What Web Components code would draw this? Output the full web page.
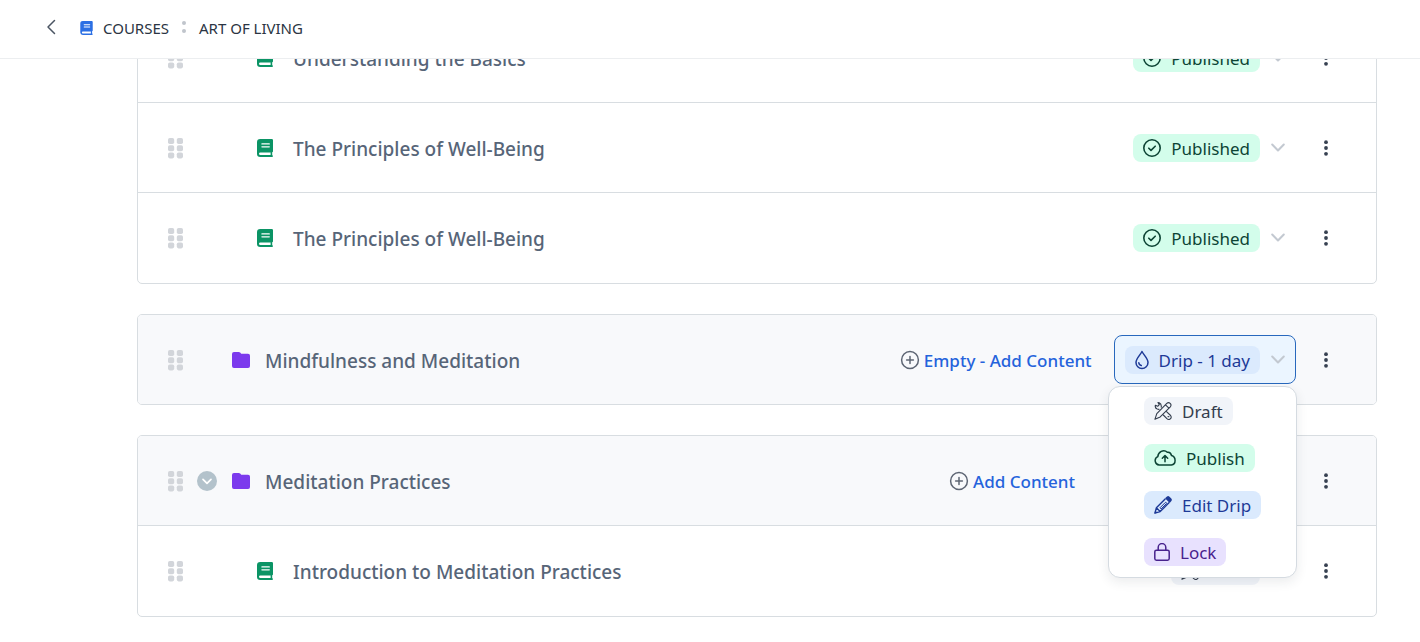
<!DOCTYPE html>
<html lang="en">
<head>
<meta charset="utf-8">
<meta name="viewport" content="width=device-width, initial-scale=1">
<title>Art of Living</title>
<style>
  body {
    margin: 0;
    background: #fff;
    color: #576578;
    font-family: "Noto Sans", "Open Sans", sans-serif;
    font-weight: 500;
  }
</style>
</head>
<body>
<course-page>
  <course-header slot="header" section="Courses" course="Art of Living"></course-header>
  <course-card>
    <course-row kind="lesson" label="Understanding the Basics" status="published"></course-row>
    <course-row kind="lesson" label="The Principles of Well-Being" status="published"></course-row>
    <course-row kind="lesson" label="The Principles of Well-Being" status="published"></course-row>
  </course-card>
  <course-card>
    <course-row kind="section" label="Mindfulness and Meditation" action="Empty - Add Content" status="drip" open></course-row>
  </course-card>
  <course-card>
    <course-row kind="section" label="Meditation Practices" action="Add Content" collapsible></course-row>
    <course-row kind="lesson" label="Introduction to Meditation Practices" status="draft"></course-row>
  </course-card>
</course-page>

<script>
const ICONS = {
  back: [10, 16, '<path d="M8.5 1.5 2 8l6.5 6.5" fill="none" stroke="currentColor" stroke-width="1.5" stroke-linecap="round" stroke-linejoin="round"/>'],
  book: [16, 18, '<path fill-rule="evenodd" fill="currentColor" d="M3.2 0H14.8Q16 0 16 1.2V12.2Q16 13 15.2 13.3V16.2Q16 16.4 16 17.1 16 18 15 18H3.2Q0 18 0 14.8V3.2Q0 0 3.2 0ZM3.4 13.5Q2 13.6 2 14.8T3.4 16.1H13.6V13.5ZM4.9 4.3Q4.3 4.3 4.3 4.9T4.9 5.5H12.3Q12.9 5.5 12.9 4.9T12.3 4.3ZM4.9 7.2Q4.3 7.2 4.3 7.8T4.9 8.4H12.3Q12.9 8.4 12.9 7.8T12.3 7.2Z"/>'],
  folder: [18, 16, '<path fill="currentColor" d="M2 0H6.7Q7.6 0 8.2.6L9.2 1.7H16Q18 1.7 18 3.7V14Q18 16 16 16H2Q0 16 0 14V2Q0 0 2 0Z"/>'],
  drag: [16, 22, '<g fill="currentColor"><rect x="0" y="1" width="6.2" height="6" rx="1.8"/><rect x="8.8" y="1" width="6.2" height="6" rx="1.8"/><rect x="0" y="8.2" width="6.2" height="6" rx="1.8"/><rect x="8.8" y="8.2" width="6.2" height="6" rx="1.8"/><rect x="0" y="15.4" width="6.2" height="6" rx="1.8"/><rect x="8.8" y="15.4" width="6.2" height="6" rx="1.8"/></g>'],
  toggle: [20, 20, '<circle cx="10" cy="10" r="10" fill="#b3c2cb"/><path d="m6 8.4 4 4 4-4" fill="none" stroke="#fff" stroke-width="1.7" stroke-linecap="round" stroke-linejoin="round"/>'],
  plus: [20, 20, '<g fill="none" stroke="currentColor" stroke-width="1.5" stroke-linecap="round"><circle cx="10" cy="10" r="8.4"/><path d="M10 6.6v6.8M6.6 10h6.8"/></g>'],
  chevron: [14, 10, '<path d="m1.2 1.5 5.8 6 5.8-6" fill="none" stroke="currentColor" stroke-width="2" stroke-linecap="round" stroke-linejoin="round"/>'],
  more: [6, 18, '<g fill="currentColor"><circle cx="3" cy="3.2" r="1.9"/><circle cx="3" cy="9" r="1.9"/><circle cx="3" cy="14.8" r="1.9"/></g>'],
  published: [18, 18, '<g fill="none" stroke="currentColor" stroke-width="1.6" stroke-linecap="round" stroke-linejoin="round"><circle cx="9" cy="9" r="8.2"/><path d="m5.8 9.2 2.2 2.2 4.2-4.2"/></g>'],
  drip: [14, 20, '<g fill="none" stroke="currentColor" stroke-width="1.5" stroke-linecap="round" stroke-linejoin="round"><path d="M7 1.5C5.4 4.8 1 8.4 1 12.5a6 6 0 0 0 12 0C13 8.4 8.6 4.8 7 1.5Z"/><path d="M3.8 12.8q.2 2.3 2.5 2.7"/></g>'],
  draft: [18, 20, '<g fill="none" stroke="currentColor" stroke-width="1.1" stroke-linecap="round" stroke-linejoin="round"><path d="M12.8 2.4Q14.5.8 16.2 2.4 17.8 4 16.3 5.8L6.2 15.9.9 18.3 2.8 12.6ZM11.5 3.8l3.4 3.3"/><path d="M7.2 6.3Q7.8 3.1 5.2 1.8L3.9 1.5 5.3 3.6 3.7 5.3 1.4 4.2Q.7 7 3.2 8L5 8.4M12.5 10.6l4.1 3.9q1.4 2.2-.5 3.5-1.7 1.1-3.2-.3L9.3 14"/><path d="m14 15.6 1 .1"/></g>'],
  publish: [22, 18, '<g fill="none" stroke="currentColor" stroke-width="1.5" stroke-linecap="round" stroke-linejoin="round"><path d="M5.2 16A4.4 4.4 0 0 1 3.8 7.6C4 3.2 9.7-.4 13.3 3.3Q16.7 2.7 17.5 6.5C22.2 7.7 22.4 15.3 17.4 16Z"/><path d="M11 12.8V6.7M8.3 9.2 11 6.5l2.7 2.7"/></g>'],
  edit: [18, 18, '<path fill="currentColor" d="m11 2.2 2-1.7Q14.2-.4 15.5.7L17.3 2.5Q18.5 4 17.2 5.2L15.7 7Z"/><path d="M11.4 2.8 2.4 11.8.9 17.1l5.3-1.5 9-9M2.4 11.8l3.8 3.8" fill="none" stroke="currentColor" stroke-width="1.4" stroke-linejoin="round"/><path d="m6 11.8 5.2-5.2q.6-.5 1.1 0t0 1.1L7.1 12.9Z" fill="none" stroke="currentColor" stroke-width="1"/><path d="M.5 17.5l.8-3 2.2 2.2Z" fill="currentColor"/>'],
  lock: [16, 18, '<g fill="none" stroke="currentColor" stroke-width="1.5"><rect x=".8" y="7.2" width="14.4" height="10" rx="1.6"/><path d="M4.2 7.2V4.4a3.8 3.8 0 0 1 7.6 0v2.8"/></g>']
};

class CourseIcon extends HTMLElement {
  connectedCallback() {
    const [w, h, shape] = ICONS[this.getAttribute('name')];
    const scale = Number(this.getAttribute('scale') || 1);
    this.attachShadow({ mode: 'open' }).innerHTML = `
      <style>:host { display: inline-flex; flex: none; } svg { display: block; }</style>
      <svg aria-hidden="true" width="${Math.round(w * scale)}" height="${Math.round(h * scale)}" viewBox="0 0 ${w} ${h}">${shape}</svg>`;
  }
}
customElements.define('course-icon', CourseIcon);

class StatusBadge extends HTMLElement {
  connectedCallback() {
    this.attachShadow({ mode: 'open' }).innerHTML = `
      <style>
        :host {
          display: inline-flex; align-items: center; gap: 10px;
          box-sizing: border-box; height: 28px; padding: 0 10px;
          border-radius: 8px; font-size: 17px; font-weight: 400; line-height: 28px; white-space: nowrap;
        }
        :host([tone="green"]) { background: #d3fdeb; color: #0d4435; }
        :host([tone="blue"]) { background: #dbeafd; color: #1e3a97; }
        :host([tone="grey"]) { background: #f1f4f9; color: #333d4d; }
        :host([tone="purple"]) { background: #e8e1fe; color: #48228d; }
        span { margin-top: 2px; }
      </style>
      <course-icon name="${this.getAttribute('icon')}"></course-icon><span><slot></slot></span>`;
  }
}
customElements.define('status-badge', StatusBadge);

class StatusMenu extends HTMLElement {
  connectedCallback() {
    this.attachShadow({ mode: 'open' }).innerHTML = `
      <style>
        :host { display: block; }
        ul {
          display: flex; flex-direction: column; gap: 19px;
          box-sizing: border-box; width: 189px; margin: 0; padding: 10px 35px 11px;
          list-style: none; background: #fff; border: 1px solid #d5dbe1; border-radius: 12px;
          box-shadow: 0 4px 12px rgba(30, 41, 59, .09);
        }
        li { display: flex; }
        button { display: flex; padding: 0; border: 0; background: none; font: inherit; cursor: pointer; }
      </style>
      <ul>
        <li><button type="button"><status-badge tone="grey" icon="draft">Draft</status-badge></button></li>
        <li><button type="button"><status-badge tone="green" icon="publish">Publish</status-badge></button></li>
        <li><button type="button"><status-badge tone="blue" icon="edit">Edit Drip</status-badge></button></li>
        <li><button type="button"><status-badge tone="purple" icon="lock">Lock</status-badge></button></li>
      </ul>`;
  }
}
customElements.define('status-menu', StatusMenu);

const STATUS = {
  published: ['green', 'published', 'Published'],
  drip: ['blue', 'drip', 'Drip - 1 day'],
  draft: ['grey', 'draft', 'Draft']
};

class StatusPicker extends HTMLElement {
  connectedCallback() {
    const [tone, icon, text] = STATUS[this.getAttribute('value')];
    const open = this.hasAttribute('open');
    this.attachShadow({ mode: 'open' }).innerHTML = `
      <style>
        :host { display: block; position: relative; }
        button {
          display: flex; align-items: center; gap: 11px;
          box-sizing: border-box; height: 49px; padding: 0 10px;
          border: 1px solid transparent; border-radius: 8px;
          background: none; color: #c3c9d1; font: inherit; cursor: pointer;
        }
        :host([open]) button { background: #ebf5ff; border-color: #2868bd; }
        status-menu { position: absolute; z-index: 10; top: calc(100% + 2px); right: -1px; }
      </style>
      <button type="button" aria-haspopup="true" aria-expanded="${open}">
        <status-badge tone="${tone}" icon="${icon}">${text}</status-badge>
        <course-icon name="chevron"></course-icon>
      </button>
      ${open ? '<status-menu></status-menu>' : ''}`;
  }
}
customElements.define('status-picker', StatusPicker);

class CourseRow extends HTMLElement {
  connectedCallback() {
    const section = this.getAttribute('kind') === 'section';
    const status = this.getAttribute('status');
    const action = this.getAttribute('action');
    this.attachShadow({ mode: 'open' }).innerHTML = `
      <style>
        :host {
          display: flex; align-items: center; box-sizing: border-box;
          min-height: 90px; padding: 0 30px;
        }
        :host([kind="section"]) { box-sizing: content-box; min-height: 89px; background: #f8f9fb; }
        button { display: flex; align-items: center; justify-content: center; padding: 0; border: 0; background: none; cursor: pointer; }
        .drag { width: 16px; color: #d2d5da; }
        .toggle { display: flex; width: 20px; margin: 0 15px 0 13px; }
        .kind { color: #7c3aed; }
        h2 { flex: 1; margin: 2px 0 0 15px; font-size: 19px; line-height: 28px; font-weight: 500; }
        :host([kind="lesson"]) .kind { margin-left: 25px; color: #0b9465; }
        :host([kind="lesson"]) h2 { margin-left: 20px; }
        a { display: flex; align-items: center; gap: 4px; margin-right: 22px; color: #2563dc; font-size: 17px; line-height: 28px; text-decoration: none; }
        a span { margin-top: 2px; }
        a course-icon { color: #5d6573; }
        .none { width: 199px; }
        .more { width: 40px; height: 40px; margin-left: 10px; color: #374151; }
      </style>
      <button class="drag" type="button" aria-label="Reorder"><course-icon name="drag"></course-icon></button>
      <span class="toggle">${this.hasAttribute('collapsible') ? '<button type="button" aria-label="Collapse"><course-icon name="toggle"></course-icon></button>' : ''}</span>
      <course-icon class="kind" name="${section ? 'folder' : 'book'}"></course-icon>
      <h2>${this.getAttribute('label')}</h2>
      ${action ? `<a href="#"><course-icon name="plus"></course-icon><span>${action}</span></a>` : ''}
      ${status ? `<status-picker value="${status}" ${this.hasAttribute('open') ? 'open' : ''}></status-picker>` : '<span class="none"></span>'}
      <button class="more" type="button" aria-label="More options"><course-icon name="more"></course-icon></button>`;
  }
}
customElements.define('course-row', CourseRow);

class CourseCard extends HTMLElement {
  connectedCallback() {
    this.attachShadow({ mode: 'open' }).innerHTML = `
      <style>
        :host { display: block; border: 1px solid #d8dde1; border-radius: 5px; }
        ::slotted(course-row:not(:last-child)) { border-bottom: 1px solid #d8dde1; }
        ::slotted(course-row:first-child) { border-top-left-radius: 4px; border-top-right-radius: 4px; }
        ::slotted(course-row:last-child) { border-bottom-left-radius: 4px; border-bottom-right-radius: 4px; }
      </style>
      <slot></slot>`;
  }
}
customElements.define('course-card', CourseCard);

class CourseHeader extends HTMLElement {
  connectedCallback() {
    this.attachShadow({ mode: 'open' }).innerHTML = `
      <style>
        :host { display: block; background: #fff; border-bottom: 1px solid #eceef0; }
        nav { display: flex; align-items: center; box-sizing: border-box; height: 58px; padding: 0 46px 4px; }
        button { display: flex; padding: 0; border: 0; background: none; color: #4b5563; cursor: pointer; }
        a { display: flex; align-items: center; gap: 10px; padding-top: 2px; color: #2b3543; font-size: 15px; font-weight: 400; line-height: 20px; text-decoration: none; text-transform: uppercase; }
        .section { margin-left: 24px; }
        .section course-icon { color: #2b6fe4; }
        .dots { display: flex; flex-direction: column; gap: 4px; margin: 0 13px; }
        .dots i { width: 4px; height: 4px; border-radius: 50%; background: #c0c5cc; }
      </style>
      <nav aria-label="Breadcrumb">
        <button type="button" aria-label="Back"><course-icon name="back"></course-icon></button>
        <a class="section" href="#"><course-icon name="book" scale="0.8"></course-icon>${this.getAttribute('section')}</a>
        <span class="dots"><i></i><i></i></span>
        <a href="#">${this.getAttribute('course')}</a>
      </nav>`;
  }
}
customElements.define('course-header', CourseHeader);

class CoursePage extends HTMLElement {
  connectedCallback() {
    this.attachShadow({ mode: 'open' }).innerHTML = `
      <style>
        :host { display: block; }
        header { position: sticky; top: 0; z-index: 20; }
        /* The list rests partly scrolled beneath the sticky header. */
        main { display: flex; flex-direction: column; gap: 30px; margin-top: -47px; padding: 0 43px 24px 137px; }
      </style>
      <header><slot name="header"></slot></header>
      <main><slot></slot></main>`;
  }
}
customElements.define('course-page', CoursePage);
</script>
</body>
</html>
